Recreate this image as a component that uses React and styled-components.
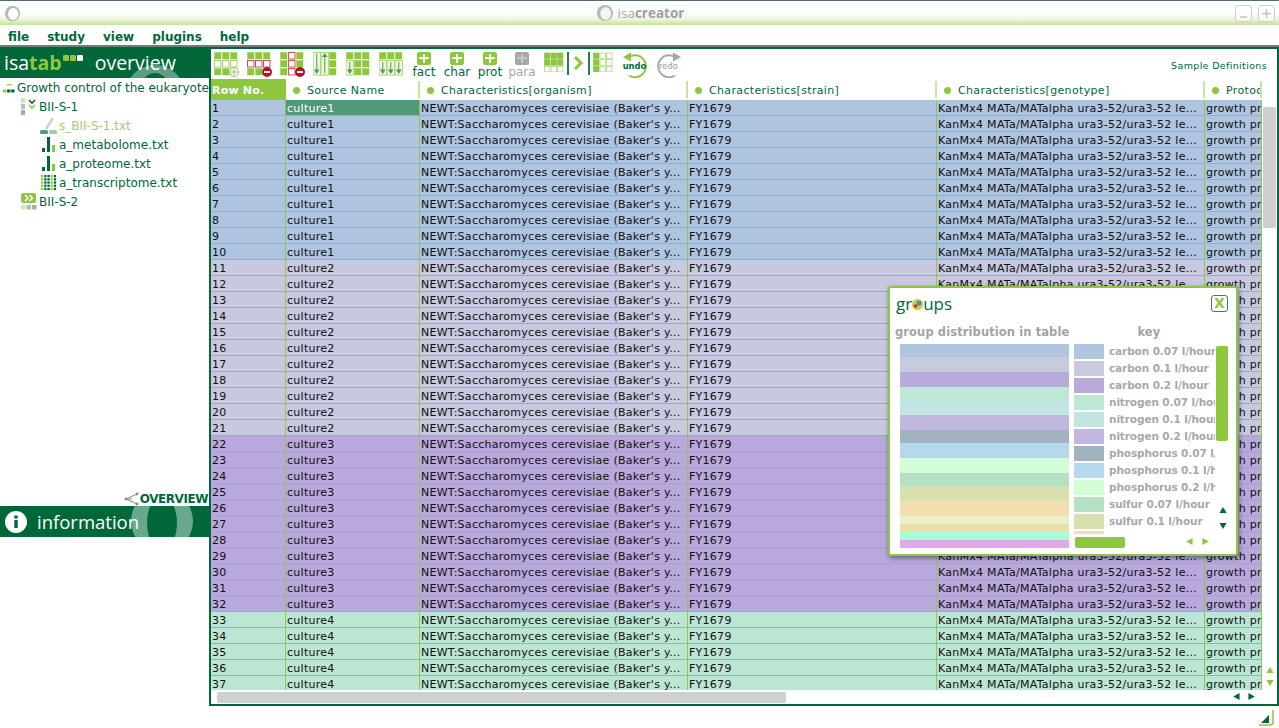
import React from "react";
import styled, { createGlobalStyle } from "styled-components";

const GREEN = "#006838";
const LIME = "#8dc63f";
const FONT = `"DejaVu Sans", Verdana, sans-serif`;

const Global = createGlobalStyle`
  html, body { margin: 0; padding: 0; background: #fff; }
  body { font-family: ${FONT}; }
  *, *::before, *::after { box-sizing: border-box; }
`;

const Page = styled.div`
  position: relative;
  width: 1279px;
  height: 728px;
  overflow: hidden;
  background: #fff;
  display: flex;
  flex-direction: column;
`;

const TitleBar = styled.div`
  height: 25px;
  flex: none;
  border-top: 1px solid #4f6f64;
  background: linear-gradient(#fff 0%, #fff 45%, #eef6e0 75%, #c4e398 100%);
  display: flex;
  align-items: center;
  padding: 0 4px;
`;
const TitleCenter = styled.div`
  flex: 1;
  display: flex;
  align-items: center;
  justify-content: center;
  gap: 4px;
  padding-left: 24px;
  color: #a9a9a9;
  font: 13.5px "Open Sans", sans-serif;
  b { font-weight: 700; color: #a0a0a0; }
`;
const WinBtn = styled.div`
  width: 17px;
  height: 17px;
  margin-left: ${p => p.$gap || 0}px;
  border: 1px solid #cfcfcf;
  border-radius: 3px;
  color: #c4c4c4;
  background: rgba(255, 255, 255, 0.55);
  display: flex;
  align-items: center;
  justify-content: center;
`;

const MenuBar = styled.div`
  height: 22px;
  flex: none;
  display: flex;
  align-items: center;
  gap: 18px;
  padding: 4px 0 0 8px;
  font: bold 12px ${FONT};
  color: ${GREEN};
  border-bottom: 2px solid #6f7f78;
`;

const Main = styled.div`
  height: 659px;
  flex: none;
  display: flex;
`;

const Left = styled.div`
  width: 209px;
  flex: none;
  display: flex;
  flex-direction: column;
`;
const GreenBand = styled.div`
  position: relative;
  overflow: hidden;
  height: 31px;
  flex: none;
  background: ${GREEN};
  color: #fff;
  font: ${p => p.$size}px "Open Sans", sans-serif;
  display: flex;
  align-items: center;
`;
const BandRing = styled.svg`
  position: absolute;
  left: ${p => p.$x}px;
  top: ${p => p.$y}px;
`;
const BandText = styled.span`
  position: relative;
  margin-left: ${p => p.$ml || 0}px;
  b { color: ${LIME}; font-weight: 700; }
`;
const Squares = styled.span`
  position: relative;
  display: inline-flex;
  gap: 1px;
  margin: -10px 0 0 1px;
  i { width: 6px; height: 6px; border-radius: 1px; display: block; background: ${LIME}; }
  i:last-child { background: #fff; }
`;
const Tree = styled.div`
  flex: 1;
  overflow: hidden;
`;
const TreeRow = styled.div`
  height: 19px;
  display: flex;
  align-items: center;
  gap: ${p => p.$gap ?? 1}px;
  padding-left: ${p => p.$indent}px;
  font: 12px ${FONT};
  white-space: nowrap;
  color: ${p => (p.$active ? "#a3d065" : GREEN)};
`;
const OverviewLink = styled.div`
  height: 20px;
  flex: none;
  display: flex;
  align-items: center;
  justify-content: flex-end;
  gap: 1px;
  font: bold 12px ${FONT};
  letter-spacing: -0.45px;
  color: ${GREEN};
  padding: 6px 1px 0 0;
`;
const InfoFill = styled.div`
  flex: none;
  height: 169px;
`;

const Right = styled.div`
  flex: 1;
  border: 2px solid ${GREEN};
  display: flex;
  flex-direction: column;
  min-width: 0;
`;
const Toolbar = styled.div`
  height: 30px;
  flex: none;
  display: flex;
  align-items: flex-start;
  padding: 3px 10px 0 3px;
`;
const ToolSlot = styled.div`
  margin-left: ${p => p.$ml || 0}px;
  flex: none;
  display: flex;
`;
const AddTool = styled.div`
  margin-left: ${p => p.$ml || 0}px;
  width: ${p => p.$w || 24}px;
  display: flex;
  flex-direction: column;
  align-items: center;
  font: 12px ${FONT};
  line-height: 13px;
  color: ${p => (p.$off ? "#a8a8a8" : GREEN)};
`;
const Plus = styled.div`
  width: 14px;
  height: 13px;
  border-radius: 2px;
  background: ${p => (p.$off ? "#a8a8a8" : LIME)};
  position: relative;
  margin-bottom: 1px;
  &::before, &::after { content: ""; position: absolute; background: ${p => (p.$off ? "#c8c8c8" : "#fff")}; }
  &::before { left: 2px; right: 2px; top: 5px; height: 2px; }
  &::after { top: 2px; bottom: 2px; left: 6px; width: 2px; }
`;
const VBar = styled.div`
  width: 2px;
  height: 23px;
  margin: 0 0 0 ${p => p.$ml || 0}px;
  background: ${GREEN};
  opacity: 0.85;
`;
const SampleDefs = styled.div`
  margin-left: auto;
  padding-top: 8px;
  font: 9.5px ${FONT};
  letter-spacing: 0.35px;
  color: ${GREEN};
`;

const Body = styled.div`
  flex: 1;
  min-height: 0;
  display: flex;
`;
const TableWrap = styled.div`
  width: 1051px;
  flex: none;
  overflow: hidden;
`;
const COLS = "75px 134px 268px 249px 268px 57px";
const HeadRow = styled.div`
  display: grid;
  grid-template-columns: ${COLS};
  height: 21px;
  align-items: stretch;
`;
const RowNoHead = styled.div`
  background: ${LIME};
  color: #fff;
  font: bold 11px ${FONT};
  display: flex;
  align-items: center;
  padding: 1px 0 0 1px;
  white-space: nowrap;
  letter-spacing: 0.2px;
`;
const HeadCell = styled.div`
  display: flex;
  align-items: center;
  gap: 7px;
  overflow: hidden;
  white-space: nowrap;
  padding: 2px 0 0 7px;
  font: 11px ${FONT};
  letter-spacing: 0.35px;
  color: ${GREEN};
  position: relative;
  &::after {
    content: "";
    position: absolute;
    right: 0;
    top: 2px;
    bottom: 2px;
    width: 2px;
    background: #c9e4a5;
  }
`;
const Dot = styled.i`
  width: 7px;
  height: 7px;
  flex: none;
  border-radius: 50%;
  background: ${LIME};
`;
const Rows = styled.div`
  height: 590px;
  overflow: hidden;
`;
const Row = styled.div`
  display: grid;
  grid-template-columns: ${COLS};
  height: 16px;
  background: ${p => p.$bg};
  border-bottom: 1px solid #8fc851;
`;
const Cell = styled.div`
  border-right: 1px solid #8fc851;
  padding: 1px 0 0 1px;
  font: 11px/15px ${FONT};
  letter-spacing: 0.27px;
  color: ${p => (p.$sel ? "#fff" : "#111")};
  background: ${p => (p.$sel ? "#4f9a78" : "transparent")};
  white-space: nowrap;
  overflow: hidden;
`;
const VScroll = styled.div`
  flex: 1;
  display: flex;
  flex-direction: column;
  align-items: center;
  padding: 28px 0 3px;
`;
const VThumb = styled.div`
  width: 13px;
  height: 121px;
  background: #cfcfcf;
  border-radius: 2px;
`;
const ArrowStack = styled.div`
  margin-top: auto;
  display: flex;
  flex-direction: column;
  gap: 5px;
`;
const HScroll = styled.div`
  height: 14px;
  flex: none;
  display: flex;
  align-items: center;
  padding: 0 21px 0 6px;
`;
const HThumb = styled.div`
  width: 569px;
  height: 11px;
  background: #cfcfcf;
  border-radius: 2px;
`;
const HArrows = styled.div`
  margin-left: auto;
  display: flex;
  gap: 8px;
`;
const Footer = styled.div`
  flex: 1;
  display: flex;
  justify-content: flex-end;
  align-items: center;
  padding: 2px 3px 0 0;
`;

const Popup = styled.div`
  position: absolute;
  left: 888px;
  top: 286px;
  width: 350px;
  height: 270px;
  border: 2px solid ${LIME};
  border-radius: 3px;
  background: #fff;
  box-shadow: 1px 2px 5px rgba(0, 0, 0, 0.45);
  display: flex;
  flex-direction: column;
`;
const PopupTitle = styled.div`
  height: 30px;
  flex: none;
  display: flex;
  align-items: center;
  justify-content: space-between;
  padding: 0 8px 0 6px;
  font: 17px "Open Sans", sans-serif;
  color: ${GREEN};
`;
const Logo = styled.span`
  display: flex;
  align-items: center;
`;
const CloseBtn = styled.div`
  width: 17px;
  height: 17px;
  margin-top: 1px;
  border: 1px solid #666;
  border-radius: 3px;
  font: bold 14px/15px ${FONT};
  color: ${LIME};
  text-align: center;
`;
const PopupHeads = styled.div`
  height: 26px;
  flex: none;
  display: flex;
  align-items: center;
  padding: 2px 0 0 5px;
  font: bold 11.5px ${FONT};
  letter-spacing: 0.1px;
  color: #a3a3a3;
  white-space: nowrap;
`;
const KeyHead = styled.span`
  margin-left: 68px;
`;
const PopupBody = styled.div`
  flex: 1;
  min-height: 0;
  display: flex;
  padding: 0 0 6px 10px;
`;
const Dist = styled.div`
  width: 169px;
  flex: none;
  display: flex;
  flex-direction: column;
`;
const DistBand = styled.div`
  height: ${p => p.$h}px;
  background: ${p => p.$c};
  flex: none;
`;
const KeyCol = styled.div`
  width: 154px;
  margin-left: 5px;
  display: flex;
  flex-direction: column;
`;
const KeyTop = styled.div`
  height: 190px;
  flex: none;
  display: flex;
`;
const KeyList = styled.div`
  width: 141px;
  flex: none;
  overflow: hidden;
`;
const KeyItem = styled.div`
  height: 17px;
  display: flex;
  align-items: flex-start;
  gap: 5px;
  white-space: nowrap;
  font: bold 10.5px/14px ${FONT};
  letter-spacing: -0.1px;
  color: #a8a8a8;
`;
const Swatch = styled.i`
  width: 30px;
  height: 15px;
  flex: none;
  background: ${p => p.$c};
`;
const KeyScroll = styled.div`
  flex: 1;
  display: flex;
  flex-direction: column;
  align-items: center;
  padding-top: 2px;
`;
const KeyThumb = styled.div`
  width: 12px;
  height: 95px;
  border-radius: 2px;
  background: ${LIME};
`;
const KeyArrows = styled.div`
  margin-top: 65px;
  margin-left: 2px;
  display: flex;
  flex-direction: column;
  gap: 8px;
`;
const KeyBottom = styled.div`
  flex: 1;
  display: flex;
  align-items: center;
  padding: 2px 0 0 1px;
`;
const KeyHThumb = styled.div`
  width: 50px;
  height: 11px;
  border-radius: 2px;
  background: ${LIME};
`;
const KeyHArrows = styled.div`
  margin-left: 60px;
  display: flex;
  gap: 9px;
`;

const Ring = ({ size = 17, color = "#b9b9b9", inner = "#fff" }) => (
  <svg width={size} height={size} viewBox="0 0 20 20">
    <circle cx="10" cy="10" r="9" fill={color} />
    <ellipse cx="10.8" cy="10.5" rx="6" ry="7" fill={inner} />
  </svg>
);

const Tri = ({ dir, color, s = 6 }) => {
  const pts = {
    up: "0,8 4,1 8,8",
    down: "0,1 8,1 4,8",
    left: "8,0 8,8 1,4",
    right: "0,0 0,8 7,4",
  }[dir];
  return (
    <svg width={s + 2} height={s + 2} viewBox="0 0 8 9" style={{ display: "block" }}>
      <polygon points={pts} fill={color} />
    </svg>
  );
};

const cellFill = { f: LIME, e: "#fff", r: "#fff" };
const cellStroke = { f: LIME, e: "#a5d36c", r: "#c8505f" };
const GridIcon = ({ cells, badge, arrows = [], size = 26 }) => (
  <svg width={size} height={size} viewBox="0 0 26 26" style={{ display: "block" }}>
    {cells.join("").split("").map((c, i) => {
      const x = (i % 3) * 8 + 0.5;
      const y = Math.floor(i / 3) * 8 + 0.5;
      return <rect key={i} x={x} y={y} width={6.5} height={6.5} fill={cellFill[c]} stroke={cellStroke[c]} strokeWidth={c === "f" ? 0.4 : 1} />;
    })}
    {arrows.map(([col, dir, from = 0], i) => {
      const cx = col * 8 + 3.75;
      const top = from * 8 + 0.5;
      return (
        <g key={i}>
          <rect x={cx - 3.7} y={top} width={7.4} height={23 - top} fill="#eef7e2" stroke="#a5d36c" strokeWidth={0.8} />
          <line x1={cx} x2={cx} y1={top + 1.5} y2={21} stroke="#4f9a58" strokeWidth={1} />
          {dir === "down"
            ? <polygon points={`${cx - 2.8},17.5 ${cx + 2.8},17.5 ${cx},22`} fill="#4f9a58" />
            : <polygon points={`${cx - 2.8},5 ${cx + 2.8},5 ${cx},1`} fill="#4f9a58" />}
        </g>
      );
    })}
    {badge === "plus" && (
      <g>
        <circle cx="20" cy="20" r="4.5" fill="#fff" stroke="#7fb24a" strokeWidth="0.8" />
        <path d="M20 16.5v7M16.5 20h7" stroke="#7fb24a" strokeWidth="0.8" />
      </g>
    )}
    {badge === "minus" && (
      <g>
        <circle cx="20" cy="20" r="5" fill="#b5122b" />
        <rect x="17" y="19" width="6" height="2" fill="#fff" />
      </g>
    )}
  </svg>
);

const RoundArrow = ({ color, label, flip }) => (
  <svg width="28" height="26" viewBox="0 0 28 26" style={{ display: "block" }}>
    <g transform={flip ? "translate(28,0) scale(-1,1)" : undefined}>
      <path d="M8 5 A11 11 0 1 1 8 23.5" fill="none" stroke={color} strokeWidth="2" />
      <polygon points="2,5 10,0.5 10,9.5" fill={color} />
    </g>
    <text x="13.5" y="16.5" textAnchor="middle" fontFamily="DejaVu Sans" fontSize="8.4" fontWeight={flip ? 400 : 700} fill={flip ? "#999" : GREEN}>{label}</text>
  </svg>
);

const Bars = () => (
  <svg width="14" height="17" viewBox="0 0 14 17">
    <rect x="0" y="12" width="3" height="4" fill={GREEN} />
    <rect x="5" y="1" width="3" height="15" fill={GREEN} />
    <rect x="10" y="9" width="3" height="7" fill={LIME} />
  </svg>
);
const Dots = () => (
  <svg width="16" height="16" viewBox="0 0 16 16">
    {Array.from({ length: 25 }).map((_, i) => (
      <rect key={i} x={(i % 5) * 3.2} y={Math.floor(i / 5) * 3.2} width="2.3" height="2.3" fill={(i + Math.floor(i / 5)) % 3 === 0 ? LIME : GREEN} />
    ))}
  </svg>
);

const blue = "#aec4df", lav = "#c7c9df", pur = "#b8a8dc", grn = "#bce6d4";
const rows = Array.from({ length: 37 }, (_, i) => {
  const n = i + 1;
  if (n <= 10) return { n, src: "culture1", bg: blue };
  if (n <= 21) return { n, src: "culture2", bg: lav };
  if (n <= 32) return { n, src: "culture3", bg: pur };
  return { n, src: "culture4", bg: grn };
});

const heads = ["Source Name", "Characteristics[organism]", "Characteristics[strain]", "Characteristics[genotype]", "Protocol REF"];

const bands = [
  [13, "#b0c6e0"], [15, "#c8cade"], [15, "#b9aadc"], [13, "#bde8d6"], [15, "#c1e5e3"],
  [15, "#c2b8df"], [13, "#a0b3bf"], [15, "#b4d8ec"], [15, "#d5fdd5"], [13, "#b4e0c4"],
  [15, "#d8e0b0"], [15, "#f3deb0"], [8, "#ecf0c8"], [8, "#e8e0a8"], [8, "#a8fcd8"], [8, "#e0aae8"],
];
const keys = [
  ["#b0c6e0", "carbon 0.07 l/hour"], ["#c8cade", "carbon 0.1 l/hour"], ["#b9aadc", "carbon 0.2 l/hour"],
  ["#bde8d6", "nitrogen 0.07 l/hour"], ["#c1e5e3", "nitrogen 0.1 l/hour"], ["#c2b8df", "nitrogen 0.2 l/hour"],
  ["#a0b3bf", "phosphorus 0.07 l/hour"], ["#b4d8ec", "phosphorus 0.1 l/hour"], ["#d5fdd5", "phosphorus 0.2 l/hour"],
  ["#b4e0c4", "sulfur 0.07 l/hour"], ["#d8e0b0", "sulfur 0.1 l/hour"], ["#f3deb0", "sulfur 0.2 l/hour"],
];

export default function App() {
  return (
    <Page>
      <Global />
      <TitleBar>
        <Ring />
        <TitleCenter>
          <Ring size={18} inner="#f4f8ee" />
          <span>isa<b>creator</b></span>
        </TitleCenter>
        <WinBtn>
          <svg width="11" height="11" viewBox="0 0 11 11"><path d="M2 9h7" stroke="#c4c4c4" strokeWidth="1.5" /></svg>
        </WinBtn>
        <WinBtn $gap={6}>
          <svg width="11" height="11" viewBox="0 0 11 11"><path d="M1 5.5h9M5.5 1v9" stroke="#c4c4c4" strokeWidth="1.5" /></svg>
        </WinBtn>
      </TitleBar>
      <MenuBar>
        <span>file</span><span>study</span><span>view</span><span>plugins</span><span>help</span>
      </MenuBar>
      <Main>
        <Left>
          <GreenBand $size={19.5}>
            <BandRing $x={125} $y={18} width="60" height="60" viewBox="0 0 60 60">
              <circle cx="30" cy="30" r="30" fill="#5f9e84" />
              <ellipse cx="30" cy="33" rx="18" ry="25" fill={GREEN} />
            </BandRing>
            <BandText $ml={4}>isa<b>tab</b></BandText>
            <Squares><i /><i /><i /></Squares>
            <BandText $ml={12}>overview</BandText>
          </GreenBand>
          <Tree>
            <TreeRow $indent={3} $gap={2}>
              <svg width="16" height="14" viewBox="0 0 16 14">
                <rect x="5" y="2" width="7" height="1.5" fill={LIME} />
                <rect x="0" y="9" width="4.5" height="4" fill={LIME} />
                <rect x="5.5" y="9" width="4.5" height="4" fill={GREEN} />
                <rect x="11" y="9" width="4.5" height="4" fill={GREEN} />
              </svg>
              <span>Growth control of the eukaryote</span>
            </TreeRow>
            <TreeRow $indent={21}>
              <svg width="17" height="17" viewBox="0 0 17 17">
                <rect x="0" y="0" width="4" height="5" fill="#cfe8ae" />
                <rect x="0" y="6" width="4" height="5" fill="#9ecbb0" />
                <rect x="0" y="12" width="4" height="5" fill="#8fb8a5" />
                <path d="M8 2l3 3 3-3" fill="none" stroke={GREEN} strokeWidth="1.6" />
                <path d="M8 7l3 3 3-3" fill="none" stroke={LIME} strokeWidth="1.6" />
              </svg>
              <span>BII-S-1</span>
            </TreeRow>
            <TreeRow $indent={40} $active $gap={1}>
              <svg width="18" height="18" viewBox="0 0 18 18">
                <path d="M6 12L13 1" stroke="#c4d8c8" strokeWidth="2.5" />
                <rect x="0" y="13" width="8" height="4" rx="1.5" fill="#4f9a78" />
                <rect x="9" y="13" width="8" height="4" rx="1.5" fill="#9ecbb0" />
              </svg>
              <span>s_BII-S-1.txt</span>
            </TreeRow>
            <TreeRow $indent={42} $gap={3}><Bars /><span>a_metabolome.txt</span></TreeRow>
            <TreeRow $indent={42} $gap={3}><Bars /><span>a_proteome.txt</span></TreeRow>
            <TreeRow $indent={41} $gap={2}><Dots /><span>a_transcriptome.txt</span></TreeRow>
            <TreeRow $indent={21}>
              <svg width="17" height="17" viewBox="0 0 17 17">
                <rect x="0" y="0" width="15" height="10" rx="2" fill={LIME} />
                <path d="M4 2l3 3-3 3M8.5 2l3 3-3 3" fill="none" stroke="#fff" strokeWidth="1.6" />
                <rect x="0" y="12" width="4.5" height="4.5" fill="#cfe8ae" />
                <rect x="5.5" y="12" width="4.5" height="4.5" fill="#9ecbb0" />
                <rect x="11" y="12" width="4.5" height="4.5" fill="#8fb8a5" />
              </svg>
              <span>BII-S-2</span>
            </TreeRow>
          </Tree>
          <OverviewLink>
            <svg width="16" height="14" viewBox="0 0 16 14">
              <path d="M14 2L3 7l11 5M3 7h6" fill="none" stroke="#888" strokeWidth="1" />
              <circle cx="14" cy="2" r="1.4" fill="#888" /><circle cx="3" cy="7" r="1.4" fill="#888" /><circle cx="14" cy="12" r="1.4" fill="#888" />
            </svg>
            OVERVIEW
          </OverviewLink>
          <GreenBand $size={18.5}>
            <BandRing $x={131} $y={-16} width="62" height="62" viewBox="0 0 62 62">
              <circle cx="31" cy="31" r="31" fill="#6aa88e" />
              <ellipse cx="31" cy="33" rx="15" ry="27" fill={GREEN} />
            </BandRing>
            <svg width="22" height="22" viewBox="0 0 22 22" style={{ marginLeft: 5, position: "relative" }}>
              <circle cx="11" cy="11" r="11" fill="#fff" />
              <rect x="9.3" y="9" width="3.4" height="8" fill={GREEN} />
              <rect x="9.3" y="4.5" width="3.4" height="3" fill={GREEN} />
            </svg>
            <BandText $ml={10}>information</BandText>
          </GreenBand>
          <InfoFill />
        </Left>
        <Right>
          <Toolbar>
            <ToolSlot><GridIcon cells={["fff", "eee", "fff"]} badge="plus" /></ToolSlot>
            <ToolSlot $ml={7}><GridIcon cells={["fff", "rrr", "fff"]} badge="minus" /></ToolSlot>
            <ToolSlot $ml={7}><GridIcon cells={["frf", "frf", "frf"]} badge="minus" /></ToolSlot>
            <ToolSlot $ml={7}><GridIcon cells={["fff", "fff", "fff"]} arrows={[[0, "down"], [1, "up"]]} /></ToolSlot>
            <ToolSlot $ml={7}><GridIcon cells={["fff", "fff", "fff"]} arrows={[[0, "down", 1]]} /></ToolSlot>
            <ToolSlot $ml={7}><GridIcon cells={["fff", "fff", "fff"]} arrows={[[0, "down", 1], [1, "down", 1], [2, "down", 1]]} /></ToolSlot>
            <AddTool $ml={7}><Plus />fact</AddTool>
            <AddTool $ml={8} $w={26}><Plus />char</AddTool>
            <AddTool $ml={7} $w={26}><Plus />prot</AddTool>
            <AddTool $ml={6} $w={26} $off><Plus $off />para</AddTool>
            <ToolSlot $ml={9}>
              <svg width="20" height="20" viewBox="0 0 20 20">
                {["f", "f", "f", "f", "f", "f", "e", "e", "e"].map((c, i) => (
                  <rect key={i} x={(i % 3) * 6.5 + 0.5} y={Math.floor(i / 3) * 6.7 + 1} width="5.5" height="5.5" fill={cellFill[c]} stroke={cellStroke[c]} strokeWidth="0.7" />
                ))}
              </svg>
            </ToolSlot>
            <VBar $ml={3} />
            <ToolSlot $ml={4}>
              <svg width="12" height="22" viewBox="0 0 12 22"><path d="M2 5l6 6-6 6" fill="none" stroke={LIME} strokeWidth="3" /></svg>
            </ToolSlot>
            <VBar $ml={3} />
            <ToolSlot $ml={3}>
              <svg width="20" height="20" viewBox="0 0 20 20">
                {[0, 1, 2].flatMap(r => [0, 1, 2].map(c => (
                  <rect key={`${r}${c}`} x={c * 6.5 + 0.5} y={r * 6.7 + 1} width="5.5" height="5.5" fill={c === 0 ? LIME : "#fff"} stroke={c === 0 ? LIME : "#a5d36c"} strokeWidth="0.7" />
                )))}
              </svg>
            </ToolSlot>
            <ToolSlot $ml={8}><RoundArrow color={LIME} label="undo" /></ToolSlot>
            <ToolSlot $ml={6}><RoundArrow color="#a8a8a8" label="redo" flip /></ToolSlot>
            <SampleDefs>Sample Definitions</SampleDefs>
          </Toolbar>
          <Body>
            <TableWrap>
              <HeadRow>
                <RowNoHead>Row No.</RowNoHead>
                {heads.map(h => (
                  <HeadCell key={h}><Dot />{h}</HeadCell>
                ))}
              </HeadRow>
              <Rows>
                {rows.map(r => (
                  <Row key={r.n} $bg={r.bg}>
                    <Cell>{r.n}</Cell>
                    <Cell $sel={r.n === 1}>{r.src}</Cell>
                    <Cell>NEWT:Saccharomyces cerevisiae (Baker's y...</Cell>
                    <Cell>FY1679</Cell>
                    <Cell>KanMx4 MATa/MATalpha ura3-52/ura3-52 le...</Cell>
                    <Cell>growth protocol</Cell>
                  </Row>
                ))}
              </Rows>
            </TableWrap>
            <VScroll>
              <VThumb />
              <ArrowStack>
                <Tri dir="up" color={LIME} />
                <Tri dir="down" color={LIME} />
              </ArrowStack>
            </VScroll>
          </Body>
          <HScroll>
            <HThumb />
            <HArrows>
              <Tri dir="left" color={GREEN} />
              <Tri dir="right" color={GREEN} />
            </HArrows>
          </HScroll>
        </Right>
      </Main>
      <Footer>
        <svg width="18" height="18" viewBox="0 0 18 18">
          <polygon points="3,14 11,6 11,14" fill={GREEN} />
          <path d="M15 1v12a3 3 0 0 1-3 3H1" fill="none" stroke={LIME} strokeWidth="1.5" />
        </svg>
      </Footer>
      <Popup>
        <PopupTitle>
          <Logo>
            gr
            <svg width="11" height="11" viewBox="0 0 11 11" style={{ margin: "2px 0 0" }}>
              <circle cx="5.5" cy="5.5" r="5.5" fill="#d8c83a" />
              <circle cx="7" cy="4" r="2.6" fill="#3f8fd0" />
              <circle cx="3.5" cy="7" r="1.8" fill="#c8303a" />
            </svg>
            ups
          </Logo>
          <CloseBtn>X</CloseBtn>
        </PopupTitle>
        <PopupHeads>
          <span>group distribution in table</span>
          <KeyHead>key</KeyHead>
        </PopupHeads>
        <PopupBody>
          <Dist>
            {bands.map(([h, c], i) => <DistBand key={i} $h={h} $c={c} />)}
          </Dist>
          <KeyCol>
            <KeyTop>
              <KeyList>
                {keys.map(([c, t]) => (
                  <KeyItem key={t}><Swatch $c={c} />{t}</KeyItem>
                ))}
              </KeyList>
              <KeyScroll>
                <KeyThumb />
                <KeyArrows>
                  <Tri dir="up" color={GREEN} />
                  <Tri dir="down" color={GREEN} />
                </KeyArrows>
              </KeyScroll>
            </KeyTop>
            <KeyBottom>
              <KeyHThumb />
              <KeyHArrows>
                <Tri dir="left" color={LIME} />
                <Tri dir="right" color={LIME} />
              </KeyHArrows>
            </KeyBottom>
          </KeyCol>
        </PopupBody>
      </Popup>
    </Page>
  );
}
